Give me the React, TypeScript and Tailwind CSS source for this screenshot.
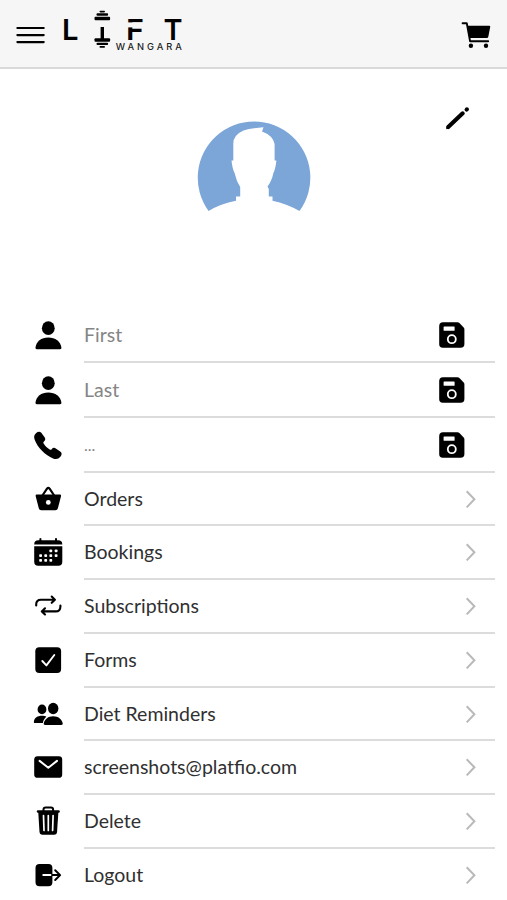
import React from "react";

type IconProps = { children: React.ReactNode };

function Icon({ children }: IconProps) {
  return (
    <svg width="30" height="30" viewBox="0 0 30 30" className="ml-[33px] shrink-0" fill="#000">
      {children}
    </svg>
  );
}

const PersonIcon = () => (
  <Icon>
    <ellipse cx="15.3" cy="8.2" rx="6.4" ry="6.9" />
    <path d="M3.8 29.2C2.9 29.2 2.4 28.7 2.5 27.6C3.1 21.5 8.3 17.4 15.3 17.4S27.7 21.5 28.4 27.6C28.5 28.7 28 29.2 27.1 29.2Z" />
  </Icon>
);

const PhoneIcon = () => (
  <Icon>
    <path d="M3.2 2.9C5 1.3 7 1.2 8.3 2.8L11.6 7.3C12.7 9 12.4 10.2 11 11.4C10.1 12.1 10.2 12.8 10.8 13.7C12.3 16 14.3 18 16.7 19.5C17.5 20 18.1 20 18.7 19.2C19.8 17.8 21.2 17.4 22.8 18.5L27.2 21.5C29 22.8 29.1 24.6 27.6 26.4C25.6 28.8 23.3 29.5 20.1 28.4C12.5 25.6 4.3 17.3 1.7 9.8C.7 6.8 1 4.8 3.2 2.9Z" />
  </Icon>
);

const BasketIcon = () => (
  <Icon>
    <path d="M9.4 11.5L14 4.7Q15.3 3.2 16.6 4.7L21.2 11.5" fill="none" stroke="#000" strokeWidth="2.2" />
    <path d="M4 10.6H26.7C27.8 10.6 28.3 11.2 28 12.3L24.9 24.3C24.5 25.6 23.7 26.2 22.4 26.2H8.3C7 26.2 6.1 25.6 5.8 24.3L2.7 12.3C2.4 11.2 2.9 10.6 4 10.6Z" />
    <circle cx="15.3" cy="18.4" r="2.4" fill="#fff" />
  </Icon>
);

const CalendarIcon = () => (
  <Icon>
    <path d="M5.5 3.2H6.4V1.6Q7.4 .2 8.4 1.6V3.2H22V1.6Q23 .2 24 1.6V3.2H25Q29.3 3.2 29.3 7.4H1.2Q1.2 3.2 5.5 3.2Z" />
    <path d="M1.2 9.2H29.3V24.8Q29.3 28.8 25.3 28.8H5.2Q1.2 28.8 1.2 24.8Z" />
    <g fill="#fff">
      {[16.4, 21.7].map((x) => <rect key={x} x={x} y="12.5" width="2.8" height="2.8" rx=".8" />)}
      {[6.2, 11.3, 16.4, 21.7].map((x) => <rect key={x} x={x} y="17.2" width="2.8" height="2.8" rx=".8" />)}
      {[6.2, 11.3, 16.4].map((x) => <rect key={x} x={x} y="22" width="2.8" height="2.8" rx=".8" />)}
    </g>
  </Icon>
);

const RepeatIcon = () => (
  <Icon>
    <g fill="none" stroke="#000" strokeWidth="2.1" strokeLinecap="round" strokeLinejoin="round">
      <path d="M3.2 14.4V13.3Q3.2 8.7 8 8.7H21.8M18.7 5.6L21.9 8.7L18.7 11.8" />
      <path d="M27.4 14.6V15.4Q27.4 20.4 22.6 20.4H8.8M12 17.3L8.8 20.4L12 23.5" />
    </g>
  </Icon>
);

const CheckIcon = () => (
  <Icon>
    <rect x="2.3" y="2.3" width="25.8" height="25.8" rx="4" />
    <path d="M9.3 16L13.4 20.4L21.3 10" fill="none" stroke="#fff" strokeWidth="1.9" strokeLinecap="round" strokeLinejoin="round" />
  </Icon>
);

const PeopleIcon = () => (
  <Icon>
    <ellipse cx="9" cy="10.4" rx="4.4" ry="4.9" />
    <path d="M1.9 24C1 24 .8 23.4 .9 22.4C1.4 18.8 4.5 16.7 8.9 16.7C11 16.7 12.3 17 13.4 17.7C11.5 19.3 10.3 21.2 9.9 24Z" />
    <ellipse cx="20.2" cy="9.5" rx="5.2" ry="5.7" />
    <path d="M12.1 26C11 26 10.5 25.4 10.8 24.3C11.7 20 15.2 17.2 20.2 17.2S28.9 20 29.7 24.3C29.9 25.4 29.4 26 28.3 26Z" />
  </Icon>
);

const MailIcon = () => (
  <Icon>
    <rect x="1.2" y="4.2" width="28" height="21.6" rx="3.4" />
    <path d="M6.6 8.9L15.3 15.8L24 8.9" fill="none" stroke="#fff" strokeWidth="2" strokeLinecap="round" strokeLinejoin="round" />
  </Icon>
);

const TrashIcon = () => (
  <Icon>
    <path d="M10.5 5V3.5Q10.5 1.4 12.6 1.4H18Q20.1 1.4 20.1 3.5V5" fill="none" stroke="#000" strokeWidth="2" />
    <rect x="3.8" y="4.2" width="23" height="2.5" rx="1.2" />
    <path d="M5.2 5.5H25.4L24.1 25.8Q23.9 28.7 21.1 28.7H9.5Q6.7 28.7 6.5 25.8Z" />
    <path d="M10.5 9.5L11 24.5M15.3 9.5V24.5M20.1 9.5L19.6 24.5" stroke="#fff" strokeWidth="1.7" strokeLinecap="round" />
  </Icon>
);

const LogoutIcon = () => (
  <Icon>
    <path d="M6.5 4H15.5Q19.4 4 19.4 8V14.1H10.2Q9.3 14.1 9.3 15.1T10.2 16.1H19.4V22.2Q19.4 26.2 15.5 26.2H6.5Q2.5 26.2 2.5 22.2V8Q2.5 4 6.5 4Z" />
    <path d="M19 15.1H27M22.2 10.2L27.1 15.1L22.2 20" fill="none" stroke="#000" strokeWidth="2" strokeLinecap="round" strokeLinejoin="round" />
  </Icon>
);

function SaveIcon() {
  return (
    <svg width="26" height="26" viewBox="0 0 26 26" className="mr-[30px] shrink-0">
      <path d="M4 .2H18.5Q19.6 .2 20.4 1L24.7 5.5Q25.4 6.3 25.4 7.4V21.9Q25.4 25.7 21.6 25.7H3.8Q.2 25.7 .2 21.9V4Q.2 .2 4 .2Z" />
      <rect x="4.6" y="4.4" width="11" height="4.4" rx=".6" fill="#fff" />
      <circle cx="12.8" cy="17.2" r="4" fill="none" stroke="#fff" strokeWidth="1.8" />
    </svg>
  );
}

function Chevron() {
  return (
    <svg width="12" height="18" viewBox="0 0 12 18" className="mr-[18px] shrink-0">
      <path d="M2.4 2L9.4 9.3L2.4 16.6" fill="none" stroke="#b9b9bb" strokeWidth="2" strokeLinecap="square" />
    </svg>
  );
}

function Logo() {
  return (
    <svg width="124" height="46" viewBox="62 8 124 46" className="ml-[17px]">
      <g fontFamily="Inter, sans-serif" fontWeight="600" fontSize="29" fill="#000">
        <text x="62" y="40.2" textLength="16.5" lengthAdjust="spacingAndGlyphs">L</text>
        <text x="126" y="40.2" textLength="18" lengthAdjust="spacingAndGlyphs">F</text>
        <text x="163.6" y="40.2" textLength="19" lengthAdjust="spacingAndGlyphs">T</text>
      </g>
      <rect x="126" y="22.4" width="19" height="5" fill="#f6f6f6" />
      <g fill="#000">
        <rect x="99.5" y="10.7" width="5.5" height="1.7" rx=".8" />
        <rect x="96.5" y="13.3" width="11.6" height="2.4" rx="1" />
        <rect x="94.5" y="16.7" width="15.6" height="3.5" rx="1" />
        <rect x="100.6" y="27" width="3.4" height="13" />
        <rect x="94.5" y="38.2" width="15.6" height="3.5" rx="1" />
        <rect x="96.5" y="42.8" width="11.6" height="2.3" rx="1" />
        <rect x="99.5" y="46.1" width="5.5" height="1.7" rx=".8" />
      </g>
      <text x="115.8" y="50" textLength="66" fontFamily="Inter, sans-serif" fontWeight="500" fontSize="9.3" fill="#222">WANGARA</text>
    </svg>
  );
}

type RowProps = { icon: React.ReactNode; label: string; size: string; text: string; field?: boolean; last?: boolean };

function Row({ icon, label, size, text, field, last }: RowProps) {
  return (
    <div className={`flex ${size}`}>
      <div className="flex w-[84px] shrink-0 items-center pb-0.5">{icon}</div>
      <div className={`mr-3 flex flex-1 items-center justify-between ${last ? "pb-0.5" : "border-b-2 border-[#dcdcdc]"}`}>
        <span className={`whitespace-nowrap ${field ? "text-[#858585]" : "text-[#303030]"} ${text}`}>{label}</span>
        {field ? <SaveIcon /> : <Chevron />}
      </div>
    </div>
  );
}

export default function App() {
  return (
    <div className="flex h-[900px] w-[507px] flex-col overflow-hidden bg-white font-['Lato',sans-serif] text-[19.5px] leading-6">
      <header className="flex h-[69px] shrink-0 items-center border-b-2 border-[#d9d9d9] bg-[#f6f6f6]">
        <svg width="29" height="18" viewBox="0 0 29 18" className="ml-4 mt-[3px]">
          <path d="M1.4 2H27.7M1.4 9.1H27.7M1.4 16.1H27.7" stroke="#000" strokeWidth="2.2" strokeLinecap="round" />
        </svg>
        <div className="-mt-1.5"><Logo /></div>
        <svg width="30" height="28" viewBox="0 0 30 28" className="ml-auto mr-4 mt-0.5">
          <path d="M1.6 2.3H5.8L9.1 20.3H27.2" fill="none" stroke="#000" strokeWidth="1.9" strokeLinecap="round" strokeLinejoin="round" />
          <path d="M6.2 4.7H28.2Q29.5 4.7 29.2 6L27.3 15.7Q27 17 25.8 17H8.6Z" />
          <circle cx="9.9" cy="24.8" r="2.2" />
          <circle cx="25" cy="24.8" r="2.2" />
        </svg>
      </header>
      <section className="relative flex h-[239px] shrink-0 justify-center">
        <svg width="114" height="92" viewBox="197 121 114 92" className="mt-[52px]">
          <path d="M208.6 211A56.3 56.3 0 1 1 299.5 211Q287 204 272.5 200.8V196.5H268.8V189L267.5 186.5Q271.8 181 273.4 173Q275.5 169 276.4 160.5H274.6V144Q273 135.5 262 131.5L263.5 127.2Q250 128.2 243.5 130.4Q233 135 233.3 144V160.5H231.5Q232.3 168.5 234.6 173Q236.3 181 240.2 187V196.5H236V200.8Q220.5 203.8 208.6 211Z" fill="#7ca6d8" />
        </svg>
        <svg width="25" height="25" viewBox="445 105 25 25" className="absolute left-[445px] top-9">
          <path d="M448.2 127.1L462.7 113.3M466.6 109.6L466.9 109.3" fill="none" stroke="#000" strokeWidth="4.1" strokeLinecap="round" />
          <path d="M446.1 129.2L447.2 125.3L450 128.1Z" />
        </svg>
      </section>
      <main className="flex flex-col">
        <Row icon={<PersonIcon />} label="First" size="h-[55px]" text="" field />
        <Row icon={<PersonIcon />} label="Last" size="h-[55px]" text="" field />
        <Row icon={<PhoneIcon />} label="..." size="h-[55px]" text="text-base" field />
        <Row icon={<BasketIcon />} label="Orders" size="h-[53px]" text="" />
        <Row icon={<CalendarIcon />} label="Bookings" size="h-[54px]" text="" />
        <Row icon={<RepeatIcon />} label="Subscriptions" size="h-[54px]" text="" />
        <Row icon={<CheckIcon />} label="Forms" size="h-[54px]" text="" />
        <Row icon={<PeopleIcon />} label="Diet Reminders" size="h-[53px]" text="" />
        <Row icon={<MailIcon />} label="screenshots@platfio.com" size="h-[54px]" text="" />
        <Row icon={<TrashIcon />} label="Delete" size="h-[54px]" text="" />
        <Row icon={<LogoutIcon />} label="Logout" size="h-[54px]" text="" last />
      </main>
    </div>
  );
}
